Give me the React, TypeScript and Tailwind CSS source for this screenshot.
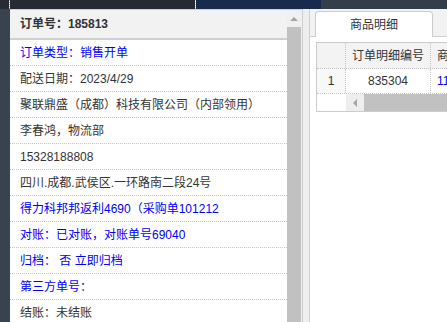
import React from "react";

type Row = { text: string; blue?: boolean };

const rows: Row[] = [
    {text: "订单类型：销售开单", blue: true},
    {text: "配送日期：2023/4/29"},
    {text: "聚联鼎盛（成都）科技有限公司（内部领用）"},
    {text: "李春鸿，物流部"},
    {text: "15328188808"},
    {text: "四川.成都.武侯区.一环路南二段24号"},
    {text: "得力科邦邦返利4690（采购单101212", blue: true},
    {text: "对账：已对账，对账单号69040", blue: true},
    {text: "归档： 否 立即归档", blue: true},
    {text: "第三方单号：", blue: true},
    {text: "结账：未结账"},
];

function TopBar() {
    return (
        <div className="flex h-[9px] shrink-0">
            <div className="w-[9px] bg-[#272b34]"></div>
            <div className="w-[1px] border-l border-dotted border-[#9aa0a8]"></div>
            <div className="w-[185px] bg-[#262a33]"></div>
            <div className="w-[1px] border-l border-dotted border-[#c8ccd2]"></div>
            <div className="w-[125px] bg-[#182b4d]"></div>
            <div className="flex-1 bg-[#343e4a]"></div>
        </div>
    );
}

function OrderPanel() {
    return (
        <div className="flex w-[293px] shrink-0 border-t border-r border-[#cfcfcf] bg-white">
            <div className="flex-1 flex flex-col">
                <div className="h-[30px] shrink-0 flex items-center pl-[10px] bg-[#f2f2f2] border-b-2 border-[#d0d0d0] text-[12px] font-bold text-[#333]">
                    订单号：185813
                </div>
                {rows.map((row, i) => (
                    <div
                        key={i}
                        className={`h-[26px] shrink-0 flex items-center pl-[10px] border-b border-dotted border-[#c4c4c4] text-[12px] whitespace-nowrap ${row.blue ? "text-[#0000ff]" : "text-[#333]"}`}
                    >
                        {row.text}
                    </div>
                ))}
            </div>
            {/* vertical scrollbar */}
            <div className="w-[15px] flex flex-col bg-[#f0f0f0]">
                <div className="h-[17px] flex items-center justify-center pr-[1px]">
                    <div className="w-0 h-0 border-l-[4px] border-r-[4px] border-b-[4px] border-l-transparent border-r-transparent border-b-[#a3a3a3]"></div>
                </div>
                <div className="flex-1 w-[14px] bg-[#c1c1c1]"></div>
            </div>
        </div>
    );
}

function DetailPanel() {
    return (
        <div className="flex-1 flex flex-col border-l border-[#d0d0d0] bg-white">
            <div className="h-[28px] shrink-0 flex items-end pl-[5px] bg-[#f2f2f2] border-b border-[#d0d0d0]">
                <div className="w-[118px] h-[26px] -mb-[1px] flex items-center justify-center rounded-t-[4px] border border-b-0 border-[#cccccc] bg-white text-[12px] text-[#333]">
                    商品明细
                </div>
            </div>
            <div className="pt-[5px] pl-[6px]">
                <div className="w-[200px] border border-[#cccccc] text-[12px] text-[#333]">
                    <div className="flex h-[26px] bg-[#f3f3f3] border-b border-dotted border-[#c4c4c4]">
                        <div className="w-[29px] border-r border-dotted border-[#c4c4c4]"></div>
                        <div className="w-[85px] flex items-center justify-center border-r border-dotted border-[#c4c4c4] whitespace-nowrap">
                            订单明细编号
                        </div>
                        <div className="flex-1 flex items-center pl-[6px] whitespace-nowrap">商品名称</div>
                    </div>
                    <div className="flex h-[25px] border-b border-dotted border-[#c4c4c4]">
                        <div className="w-[29px] flex items-center justify-center bg-[#f8f8f8] border-r border-dotted border-[#c4c4c4]">1</div>
                        <div className="w-[85px] flex items-center justify-center border-r border-dotted border-[#c4c4c4]">835304</div>
                        <div className="flex-1 flex items-center pl-[6px] text-[#0000ff]">1143</div>
                    </div>
                    <div className="flex h-[17px]">
                        <div className="w-[29px] bg-white"></div>
                        <div className="w-[18px] flex items-center justify-center bg-[#eeeeee]">
                            <div className="w-0 h-0 border-t-[4px] border-b-[4px] border-r-[4px] border-t-transparent border-b-transparent border-r-[#a3a3a3]"></div>
                        </div>
                        <div className="flex-1 bg-[#c1c1c1]"></div>
                    </div>
                </div>
            </div>
        </div>
    );
}

export default function App() {
    return (
        <div className="w-[447px] h-[322px] overflow-hidden flex flex-col bg-white font-['Liberation_Sans','Noto_Sans_CJK_SC',sans-serif]">
            <TopBar/>
            <div className="flex flex-1 min-h-0">
                <div className="w-[10px] shrink-0 bg-[#394350]"></div>
                <OrderPanel/>
                <div className="w-[6px] shrink-0 bg-[#eeeeee]"></div>
                <DetailPanel/>
            </div>
        </div>
    );
}
